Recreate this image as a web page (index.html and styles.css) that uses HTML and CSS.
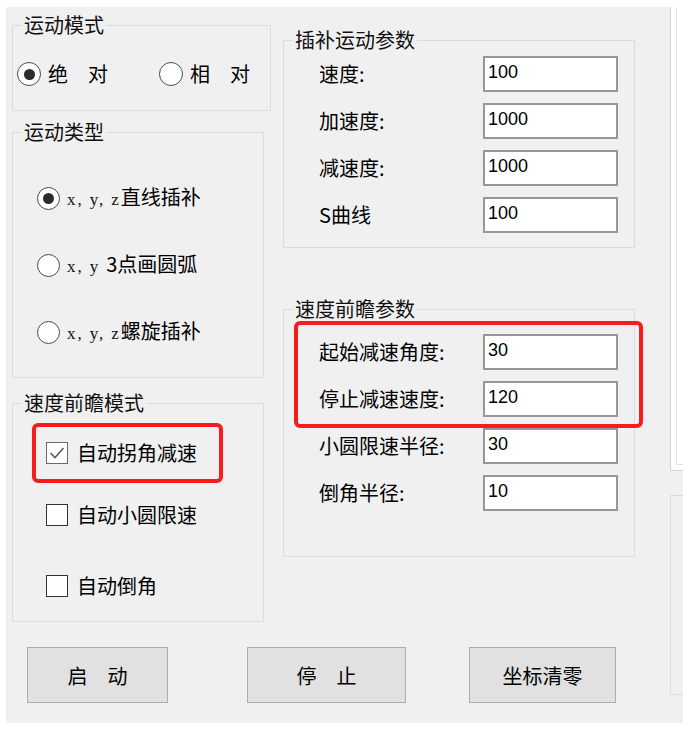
FILE: index.html
```html
<!DOCTYPE html>
<html lang="zh-CN">
<head>
<meta charset="utf-8">
<title>运动控制</title>
<link rel="stylesheet" href="styles.css">
</head>
<body>
<div class="window">
  <div class="main">
    <div class="top">
      <div class="col-left">
        <div class="group g-mode">
          <div class="group-title">运动模式</div>
          <div class="mode-row">
            <label class="opt opt-r"><span class="radio checked"><span class="dot"></span></span><span class="txt">绝　对</span></label>
            <label class="opt opt-r opt-second"><span class="radio"></span><span class="txt">相　对</span></label>
          </div>
        </div>
        <div class="group g-type">
          <div class="group-title">运动类型</div>
          <div class="type-list">
            <label class="opt opt-r"><span class="radio sm checked"><span class="dot"></span></span><span class="txt"><span class="ascii" lang="en">x, y, z</span>直线插补</span></label>
            <label class="opt opt-r"><span class="radio sm"></span><span class="txt"><span class="ascii" lang="en">x, y </span>3点画圆弧</span></label>
            <label class="opt opt-r"><span class="radio sm"></span><span class="txt"><span class="ascii" lang="en">x, y, z</span>螺旋插补</span></label>
          </div>
        </div>
        <div class="group g-look">
          <div class="group-title">速度前瞻模式</div>
          <div class="check-list">
            <label class="opt opt-c"><span class="check checked"><svg width="20" height="20" viewBox="0 0 20 20"><polyline points="3.5,10 8,14.5 16.5,5" fill="none" stroke="#5a5a5a" stroke-width="1.6"/></svg></span><span class="txt">自动拐角减速</span></label>
            <label class="opt opt-c row2"><span class="check"></span><span class="txt">自动小圆限速</span></label>
            <label class="opt opt-c row3"><span class="check"></span><span class="txt">自动倒角</span></label>
          </div>
          <div class="highlight hl-left"></div>
        </div>
      </div>
      <div class="col-mid">
        <div class="group g-interp">
          <div class="group-title">插补运动参数</div>
          <div class="fields first-interp">
            <div class="field"><span class="flabel">速度:</span><input class="edit" type="text" value="100"></div>
            <div class="field"><span class="flabel">加速度:</span><input class="edit" type="text" value="1000"></div>
            <div class="field"><span class="flabel">减速度:</span><input class="edit" type="text" value="1000"></div>
            <div class="field"><span class="flabel">S曲线</span><input class="edit" type="text" value="100"></div>
          </div>
        </div>
        <div class="group g-params">
          <div class="group-title">速度前瞻参数</div>
          <div class="fields first-params">
            <div class="field"><span class="flabel">起始减速角度:</span><input class="edit" type="text" value="30"></div>
            <div class="field"><span class="flabel">停止减速速度:</span><input class="edit" type="text" value="120"></div>
            <div class="field"><span class="flabel">小圆限速半径:</span><input class="edit" type="text" value="30"></div>
            <div class="field"><span class="flabel">倒角半径:</span><input class="edit" type="text" value="10"></div>
          </div>
          <div class="highlight hl-right"></div>
        </div>
      </div>
    </div>
    <div class="buttons">
      <button class="btn btn-start" type="button">启　动</button>
      <button class="btn btn-stop" type="button">停　止</button>
      <button class="btn btn-zero" type="button">坐标清零</button>
    </div>
  </div>
  <div class="col-right">
    <div class="side-list"><div class="side-inner"></div></div>
    <div class="side-group"></div>
  </div>
</div>
</body>
</html>
```

FILE: styles.css
```css
html, body {
  margin: 0;
  padding: 0;
  background: #ffffff;
}

body {
  font-family: "Noto Sans CJK SC", "Noto Sans", sans-serif;
  color: #000;
}

.window {
  margin: 7px 0 0 6px;
  width: 677px;
  height: 716px;
  background: #f0f0f0;
  display: flex;
  overflow: hidden;
}

.main {
  width: 664px;
  flex-shrink: 0;
  box-sizing: border-box;
  padding-left: 6px;
  display: flex;
  flex-direction: column;
}

.top {
  display: flex;
  align-items: flex-start;
}

.col-left {
  width: 259px;
  display: flex;
  flex-direction: column;
  align-items: flex-start;
}

.col-mid {
  margin-left: 12px;
  width: 352px;
  display: flex;
  flex-direction: column;
}

.group {
  position: relative;
  box-sizing: border-box;
  border: 1px solid #dcdcdc;
}

.group-title {
  margin: -13px 0 0 9px;
  padding: 0 2px;
  width: fit-content;
  background: #f0f0f0;
  font-size: 20px;
  line-height: 24px;
  color: #111;
}

.g-mode {
  margin-top: 18px;
  width: 259px;
  height: 86px;
}

.g-type {
  margin-top: 21px;
  width: 252px;
  height: 246px;
}

.g-look {
  margin-top: 25px;
  width: 252px;
  height: 219px;
}

.opt {
  display: flex;
  align-items: center;
  height: 24px;
  font-size: 20px;
  line-height: 24px;
  white-space: nowrap;
}

.opt-r {
  gap: 7px;
}

.opt-c {
  gap: 9px;
}

.mode-row {
  margin: 25px 0 0 4px;
  display: flex;
}

.opt-second {
  margin-left: 51px;
}

.radio {
  box-sizing: border-box;
  width: 24px;
  height: 24px;
  border: 1.5px solid #4a4a4a;
  border-radius: 50%;
  background: #fff;
  display: flex;
  align-items: center;
  justify-content: center;
  flex-shrink: 0;
}

.radio.sm {
  width: 23px;
  height: 23px;
}

.radio .dot {
  width: 11px;
  height: 11px;
  border-radius: 50%;
  background: #2b2b2b;
}

.type-list {
  margin: 42px 0 0 24px;
  display: flex;
  flex-direction: column;
  gap: 43px;
}

.ascii {
  font-family: "Liberation Serif", "DejaVu Serif", serif;
  font-size: 17px;
  letter-spacing: 1.9px;
  white-space: pre;
  color: #111;
}

.check-list {
  margin: 26px 0 0 33px;
  display: flex;
  flex-direction: column;
}

.row2 {
  margin-top: 38px;
}

.row3 {
  margin-top: 47px;
}

.check {
  box-sizing: border-box;
  width: 22px;
  height: 22px;
  border: 1.5px solid #333;
  background: #fff;
  flex-shrink: 0;
  display: flex;
  align-items: center;
  justify-content: center;
}

.check.checked {
  border-color: #6a6a6a;
}

.check svg {
  display: block;
}

.highlight {
  position: absolute;
  box-sizing: border-box;
  border: 4px solid #f81c1c;
  border-radius: 6px;
  pointer-events: none;
}

.hl-left {
  left: 19px;
  top: 19px;
  width: 191px;
  height: 60px;
}

.hl-right {
  left: 10px;
  top: 11px;
  width: 349px;
  height: 107px;
}

.g-interp {
  margin-top: 33px;
  height: 208px;
}

.g-params {
  margin-top: 61px;
  height: 248px;
}

.fields {
  display: flex;
  flex-direction: column;
  gap: 11px;
}

.first-interp {
  margin-top: 4px;
}

.first-params {
  margin-top: 13px;
}

.field {
  display: flex;
  align-items: center;
  height: 36px;
}

.flabel {
  margin-left: 35px;
  width: 164px;
  font-size: 20px;
  line-height: 24px;
  white-space: nowrap;
}

.edit {
  box-sizing: border-box;
  width: 135px;
  height: 36px;
  margin: 0;
  padding: 4px 3px 8px;
  border: 2px solid #979797;
  background: #fff;
  font-family: "Liberation Sans", Arial, sans-serif;
  font-size: 18px;
  line-height: 20px;
  color: #000;
  outline: none;
}

.buttons {
  margin-top: 25px;
  padding-left: 15px;
  display: flex;
}

.btn {
  box-sizing: border-box;
  height: 56px;
  margin: 0;
  padding: 0;
  border: 1px solid #adadad;
  background: #e1e1e1;
  font-family: "Noto Sans CJK SC", sans-serif;
  font-size: 20px;
  color: #000;
}

.btn-start {
  width: 141px;
}

.btn-stop {
  width: 159px;
  margin-left: 79px;
}

.btn-zero {
  width: 147px;
  margin-left: 63px;
}

.col-right {
  flex: 1;
  display: flex;
  flex-direction: column;
  min-width: 0;
}

.side-list {
  box-sizing: border-box;
  width: 30px;
  height: 464px;
  border-left: 1px solid #d4d4d4;
  border-bottom: 1px solid #d4d4d4;
  background: #fff;
  padding: 0 0 6px 5px;
}

.side-inner {
  height: 100%;
  border-left: 1px solid #e4e4e4;
  border-bottom: 1px solid #e4e4e4;
}

.side-group {
  box-sizing: border-box;
  margin-top: 24px;
  width: 30px;
  height: 200px;
  border: 1px solid #dcdcdc;
}
```
